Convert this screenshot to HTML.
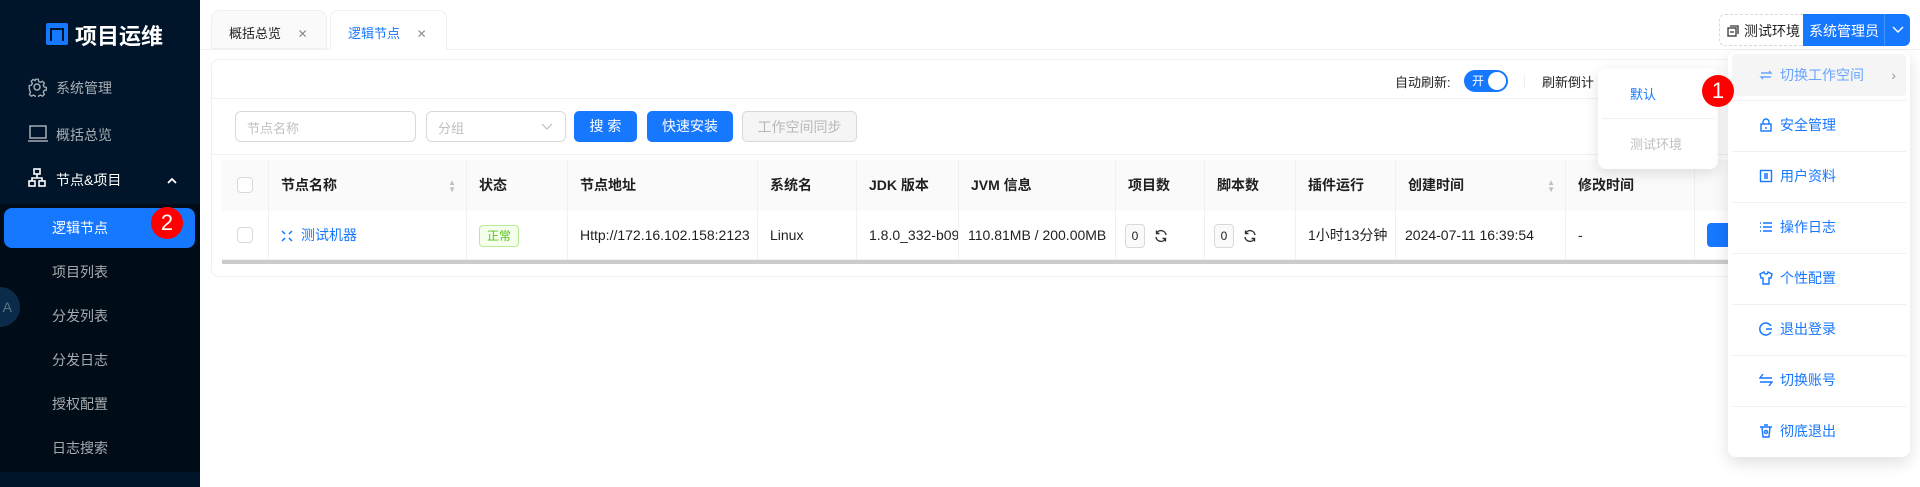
<!DOCTYPE html>
<html><head><meta charset="utf-8"><style>
*{box-sizing:border-box;margin:0;padding:0}
body{width:1920px;height:487px;overflow:hidden;background:#fff;font-family:"Liberation Sans","Noto Sans CJK SC",sans-serif;font-size:14px;color:#000000e0;position:relative}
.abs{position:absolute}
.side{left:0;top:0;width:200px;height:487px;background:#001529}
.sub{left:0;top:204px;width:200px;height:268px;background:#000c17}
.mi{position:absolute;left:56px;color:#ffffffa6;font-size:14px}
.th{position:absolute;top:160px;height:51px;line-height:51px;font-weight:bold;font-size:14px;padding-left:12px;border-right:1px solid #f0f0f0;background:#fafafa}
.td{position:absolute;top:211px;height:49px;line-height:49px;font-size:14px;padding-left:12px;border-right:1px solid #f0f0f0;border-bottom:1px solid #f0f0f0;white-space:nowrap;overflow:hidden}
.btn{position:absolute;top:111px;height:31px;line-height:31px;border-radius:5px;text-align:center;font-size:14px}
.dd{position:absolute;left:1728px;width:182px;height:51px;line-height:51px;color:#1677ff;font-size:14px;padding-left:52px}
.dd svg{position:absolute;left:31px;top:18px}
.div{position:absolute;left:1732px;width:174px;height:1px;background:#f0f0f0}
.badge{position:absolute;width:32px;height:32px;border-radius:50%;background:#f00;color:#fff;font-size:22px;line-height:32px;text-align:center}
.sort{position:absolute;right:10px;top:0;color:#bfbfbf;font-size:8px;line-height:7px;padding-top:19px}
.cnt{display:inline-block;border:1px solid #d9d9d9;border-radius:4px;width:20px;height:24px;line-height:22px;text-align:center;font-size:12px;background:#fafafa;vertical-align:middle}
</style></head><body>
<div class="abs side"></div>
<div class="abs sub"></div>
<div class="abs" style="left:46px;top:23px;width:22px;height:22px;background:#1677ff;border-radius:2px"></div>
<div class="abs" style="left:50px;top:28px;width:14px;height:13px;border:2px solid #001529;border-bottom:none"></div>
<div class="abs" style="left:75px;top:19px;color:#fff;font-size:22px;font-weight:bold">项目运维</div>
<svg class="abs" style="left:27px;top:77px" width="20" height="20" viewBox="0 0 20 20" fill="none" stroke="#ffffffa6" stroke-width="1.5"><circle cx="10" cy="10" r="3"/><path d="M8.5 1.5h3l.5 2.5 2 1 2.3-1.2 2 2-1.2 2.3.9 2 2.5.4v3l-2.5.5-.9 2 1.2 2.3-2 2-2.3-1.2-2 .9-.5 2.5h-3l-.5-2.5-2-.9-2.3 1.2-2-2 1.2-2.3-.9-2L1.5 11.5v-3L4 8l.9-2-1.2-2.3 2-2L8 3z" transform="scale(.9) translate(1 1)"/></svg>
<div class="mi" style="top:78px">系统管理</div>
<svg class="abs" style="left:28px;top:125px" width="20" height="18" viewBox="0 0 20 18" fill="none" stroke="#ffffffa6" stroke-width="1.5"><rect x="2" y="1" width="16" height="12"/><path d="M0 16h20"/></svg>
<div class="mi" style="top:125px">概括总览</div>
<svg class="abs" style="left:28px;top:168px" width="18" height="20" viewBox="0 0 18 20" fill="none" stroke="#fff" stroke-width="1.6"><rect x="6" y="1" width="6" height="5"/><rect x="1" y="13" width="6" height="5"/><rect x="11" y="13" width="6" height="5"/><path d="M9 6v4M4 13v-3h10v3"/></svg>
<div class="mi" style="top:170px;color:#fff">节点&amp;项目</div>
<svg class="abs" style="left:167px;top:177px" width="10" height="7" viewBox="0 0 10 7" fill="none" stroke="#fff" stroke-width="1.8"><path d="M1 6l4-4 4 4"/></svg>
<div class="abs" style="left:4px;top:208px;width:191px;height:40px;background:#1677ff;border-radius:8px"></div>
<div class="mi" style="left:52px;top:218px;color:#fff">逻辑节点</div>
<div class="badge" style="left:151px;top:207px">2</div>
<div class="mi" style="left:52px;top:262px">项目列表</div>
<div class="mi" style="left:52px;top:306px">分发列表</div>
<div class="mi" style="left:52px;top:350px">分发日志</div>
<div class="mi" style="left:52px;top:394px">授权配置</div>
<div class="mi" style="left:52px;top:438px">日志搜索</div>
<div class="abs" style="left:-20px;top:287px;width:40px;height:40px;border-radius:50%;background:#0a2c4a;color:#ffffff55;line-height:40px;text-align:right;padding-right:8px;font-size:14px">A</div>

<!-- tabs -->
<div class="abs" style="left:200px;top:49px;width:1720px;height:1px;background:#f0f0f0"></div>
<div class="abs" style="left:211px;top:10px;width:116px;height:39px;background:#fafafa;border:1px solid #f0f0f0;border-radius:8px 8px 0 0;padding:12px 0 0 17px;font-size:13px">概括总览 <span style="margin-left:13px;color:#00000073;font-size:12px">✕</span></div>
<div class="abs" style="left:330px;top:10px;width:117px;height:40px;background:#fff;border:1px solid #f0f0f0;border-bottom:none;border-radius:8px 8px 0 0;padding:12px 0 0 17px;font-size:13px;color:#1677ff">逻辑节点 <span style="margin-left:13px;color:#00000073;font-size:12px">✕</span></div>

<!-- card -->
<div class="abs" style="left:211px;top:59px;width:1600px;height:218px;border:1px solid #f0f0f0;border-radius:8px"></div>
<div class="abs" style="left:211px;top:98px;width:1600px;height:1px;background:#f0f0f0"></div>
<div class="abs" style="left:211px;top:154px;width:1600px;height:1px;background:#f0f0f0"></div>
<div class="abs" style="left:1395px;top:72px;font-size:13px">自动刷新:</div>
<div class="abs" style="left:1464px;top:70px;width:44px;height:22px;border-radius:11px;background:#1677ff;color:#fff;font-size:12px;line-height:22px;padding-left:8px">开</div>
<div class="abs" style="left:1488px;top:72px;width:18px;height:18px;border-radius:50%;background:#fff"></div>
<div class="abs" style="left:1524px;top:75px;width:1px;height:14px;background:#f0f0f0"></div>
<div class="abs" style="left:1542px;top:72px;font-size:13px">刷新倒计</div>

<div class="abs" style="left:235px;top:111px;width:181px;height:31px;border:1px solid #d9d9d9;border-radius:6px;padding:6px 11px;color:#bfbfbf;font-size:13px">节点名称</div>
<div class="abs" style="left:426px;top:111px;width:140px;height:31px;border:1px solid #d9d9d9;border-radius:6px;padding:6px 11px;color:#bfbfbf;font-size:13px">分组<svg style="position:absolute;right:12px;top:11px" width="12" height="8" viewBox="0 0 12 8" fill="none" stroke="#bfbfbf" stroke-width="1.2"><path d="M1 1l5 5 5-5"/></svg></div>
<div class="btn" style="left:574px;width:63px;background:#1677ff;color:#fff">搜 索</div>
<div class="btn" style="left:647px;width:86px;background:#1677ff;color:#fff">快速安装</div>
<div class="btn" style="left:742px;width:115px;background:#f5f5f5;border:1px solid #d9d9d9;color:#00000040">工作空间同步</div>

<!-- table -->
<div class="abs" style="left:222px;top:160px;width:1506px;height:51px;background:#fafafa;border-radius:8px 8px 0 0"></div>
<div class="th" style="left:222px;width:47px"><span style="position:absolute;left:15px;top:17px;width:16px;height:16px;border:1px solid #d9d9d9;border-radius:4px;background:#fff"></span></div>
<div class="th" style="left:269px;width:198px">节点名称<span class="sort">▲<br>▼</span></div>
<div class="th" style="left:467px;width:101px">状态</div>
<div class="th" style="left:568px;width:190px">节点地址</div>
<div class="th" style="left:758px;width:99px">系统名</div>
<div class="th" style="left:857px;width:102px">JDK 版本</div>
<div class="th" style="left:959px;width:157px">JVM 信息</div>
<div class="th" style="left:1116px;width:89px">项目数</div>
<div class="th" style="left:1205px;width:91px">脚本数</div>
<div class="th" style="left:1296px;width:100px">插件运行</div>
<div class="th" style="left:1396px;width:170px">创建时间<span class="sort">▲<br>▼</span></div>
<div class="th" style="left:1566px;width:129px">修改时间</div>
<div class="th" style="left:1695px;width:33px;border-right:none"></div>
<div class="td" style="left:222px;width:47px"><span style="position:absolute;left:15px;top:16px;width:16px;height:16px;border:1px solid #d9d9d9;border-radius:4px"></span></div>
<div class="td" style="left:269px;width:198px;color:#1677ff"><svg style="position:absolute;left:12px;top:19px" width="12" height="12" viewBox="0 0 12 12" fill="none" stroke="#1677ff" stroke-width="1.5"><path d="M1 1l3 3M11 1L8 4M1 11l3-3M11 11L8 8"/></svg><span style="margin-left:20px">测试机器</span></div>
<div class="td" style="left:467px;width:101px"><span style="border:1px solid #b7eb8f;background:#f6ffed;color:#52c41a;border-radius:4px;padding:3px 7px;font-size:12px">正常</span></div>
<div class="td" style="left:568px;width:190px">Http://172.16.102.158:2123</div>
<div class="td" style="left:758px;width:99px">Linux</div>
<div class="td" style="left:857px;width:102px">1.8.0_332-b09</div>
<div class="td" style="left:959px;width:157px;padding-left:9px">110.81MB / 200.00MB</div>
<div class="td" style="left:1116px;width:89px;padding-left:9px"><span class="cnt">0</span><svg style="vertical-align:middle;margin-left:9px" width="14" height="14" viewBox="0 0 14 14" fill="none" stroke="#333" stroke-width="1.4"><path d="M12 6A5 5 0 0 0 2.5 4.5M2 8a5 5 0 0 0 9.5 1.5M2.5 1.5v3h3M11.5 12.5v-3h-3"/></svg></div>
<div class="td" style="left:1205px;width:91px;padding-left:9px"><span class="cnt">0</span><svg style="vertical-align:middle;margin-left:9px" width="14" height="14" viewBox="0 0 14 14" fill="none" stroke="#333" stroke-width="1.4"><path d="M12 6A5 5 0 0 0 2.5 4.5M2 8a5 5 0 0 0 9.5 1.5M2.5 1.5v3h3M11.5 12.5v-3h-3"/></svg></div>
<div class="td" style="left:1296px;width:100px">1小时13分钟</div>
<div class="td" style="left:1396px;width:170px;padding-left:9px">2024-07-11 16:39:54</div>
<div class="td" style="left:1566px;width:129px">-</div>
<div class="td" style="left:1695px;width:33px;border-right:none"><span style="position:absolute;left:12px;top:12px;width:30px;height:24px;background:#1677ff;border-radius:4px"></span></div>
<div class="abs" style="left:222px;top:260px;width:1506px;height:4px;background:#ccc"></div>

<!-- workspace submenu -->
<div class="abs" style="left:1598px;top:68px;width:120px;height:101px;background:#fff;border-radius:8px;box-shadow:0 4px 14px rgba(0,0,0,.12)"></div>
<div class="abs" style="left:1630px;top:84px;color:#1677ff;font-size:13px">默认</div>
<div class="abs" style="left:1602px;top:118px;width:112px;height:1px;background:#f0f0f0"></div>
<div class="abs" style="left:1630px;top:134px;color:#bfbfbf;font-size:13px">测试环境</div>

<!-- top right -->
<div class="abs" style="left:1719px;top:14px;width:86px;height:32px;border:1px dashed #d9d9d9;border-radius:6px 0 0 6px;padding:6px 0 0 24px;font-size:14px;white-space:nowrap">测试环境<svg style="position:absolute;left:7px;top:10px" width="12" height="12" viewBox="0 0 12 12" fill="none" stroke="#333" stroke-width="1.3"><rect x="1" y="3" width="8" height="8"/><path d="M3 1h8v8M3 7h4"/></svg></div>
<div class="abs" style="left:1803px;top:14px;width:107px;height:32px;background:#1677ff;border-radius:0 6px 6px 0;color:#fff;padding:7px 0 0 6px;font-size:14px;white-space:nowrap">系统管理员<span style="position:absolute;left:81px;top:0;width:1px;height:32px;background:#4096ff"></span><svg style="position:absolute;left:89px;top:12px" width="12" height="8" viewBox="0 0 12 8" fill="none" stroke="#fff" stroke-width="1.4"><path d="M1 1l5 5 5-5"/></svg></div>

<div class="abs" style="left:1728px;top:51px;width:182px;height:406px;background:#fff;border-radius:8px;box-shadow:0 6px 16px rgba(0,0,0,.12)"></div>
<div class="abs" style="left:1732px;top:54px;width:174px;height:42px;background:#f5f5f5;border-radius:4px"></div>
<div class="dd" style="top:50px;color:#69a5ff"><svg width="14" height="14" viewBox="0 0 14 14" fill="none" stroke="#69a5ff" stroke-width="1.4"><path d="M2 5h10l-2-2M12 9H2l2 2"/></svg>切换工作空间<span style="position:absolute;right:14px;color:#999">›</span></div>
<div class="div" style="top:100px"></div>
<div class="dd" style="top:100px"><svg width="14" height="14" viewBox="0 0 14 14" fill="none" stroke="#1677ff" stroke-width="1.4"><rect x="2" y="6" width="10" height="7"/><path d="M4 6V4a3 3 0 0 1 6 0v2M7 9v2"/></svg>安全管理</div>
<div class="div" style="top:151px"></div>
<div class="dd" style="top:151px"><svg width="14" height="14" viewBox="0 0 14 14" fill="none" stroke="#1677ff" stroke-width="1.4"><rect x="1.5" y="1.5" width="11" height="11"/><path d="M5 5h4M5 7h4M5 9h4"/></svg>用户资料</div>
<div class="div" style="top:202px"></div>
<div class="dd" style="top:202px"><svg width="14" height="14" viewBox="0 0 14 14" fill="none" stroke="#1677ff" stroke-width="1.4"><path d="M1 3h1M1 7h1M1 11h1M4 3h9M4 7h9M4 11h9"/></svg>操作日志</div>
<div class="div" style="top:253px"></div>
<div class="dd" style="top:253px"><svg width="14" height="14" viewBox="0 0 14 14" fill="none" stroke="#1677ff" stroke-width="1.4"><path d="M5 1L1 3l1 4h2v6h6V7h2l1-4-4-2c0 1.5-1 2-2 2S5 2.5 5 1z"/></svg>个性配置</div>
<div class="div" style="top:304px"></div>
<div class="dd" style="top:304px"><svg width="14" height="14" viewBox="0 0 14 14" fill="none" stroke="#1677ff" stroke-width="1.5"><path d="M12 4A6 6 0 1 0 12 10M7 7h6"/></svg>退出登录</div>
<div class="div" style="top:355px"></div>
<div class="dd" style="top:355px"><svg width="14" height="14" viewBox="0 0 14 14" fill="none" stroke="#1677ff" stroke-width="1.4"><path d="M4 1L1 5h12M10 13l3-4H1"/></svg>切换账号</div>
<div class="div" style="top:406px"></div>
<div class="dd" style="top:406px"><svg width="14" height="14" viewBox="0 0 14 14" fill="none" stroke="#1677ff" stroke-width="1.4"><path d="M1 3h12M3 3l1 10h6l1-10M5 1h4"/><circle cx="7" cy="8" r="1.5"/></svg>彻底退出</div>
<div class="badge" style="left:1702px;top:75px">1</div>
</body></html>
